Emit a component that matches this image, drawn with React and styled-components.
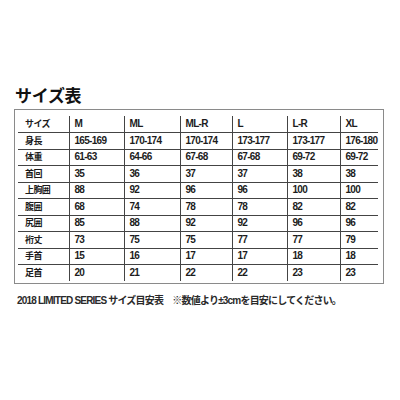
import React from "react";
import styled, { createGlobalStyle } from "styled-components";

const GlobalStyle = createGlobalStyle`
  html, body {
    margin: 0;
    padding: 0;
    background: #ffffff;
  }
  body {
    font-family: "Liberation Sans", "Noto Sans CJK JP", sans-serif;
    color: #222;
  }
`;

const columns = ["サイズ", "M", "ML", "ML-R", "L", "L-R", "XL"];
const widths = [51, 55, 56, 52, 55, 53, 38];

const rows = [
  ["身長", "165-169", "170-174", "170-174", "173-177", "173-177", "176-180"],
  ["体重", "61-63", "64-66", "67-68", "67-68", "69-72", "69-72"],
  ["首回", "35", "36", "37", "37", "38", "38"],
  ["上胸囲", "88", "92", "96", "96", "100", "100"],
  ["腹囲", "68", "74", "78", "78", "82", "82"],
  ["尻囲", "85", "88", "92", "92", "96", "96"],
  ["裄丈", "73", "75", "75", "77", "77", "79"],
  ["手首", "15", "16", "17", "17", "18", "18"],
  ["足首", "20", "21", "22", "22", "23", "23"],
];

const Page = styled.div`
  width: 400px;
  height: 400px;
  padding: 86px 0 0 15px;
  box-sizing: border-box;
`;

const Title = styled.h1`
  margin: 0 0 5px 0;
  font-family: "Noto Sans CJK JP", sans-serif;
  font-size: 17px;
  line-height: 18px;
  font-weight: 700;
  color: #111;
  letter-spacing: -0.3px;
`;

const Frame = styled.div`
  margin-left: -1px;
  width: 370px;
  height: 175px;
  box-sizing: border-box;
  border: 1px solid #8a8a8a;
  padding: 6px 0 0 3px;
`;

const Table = styled.table`
  border-collapse: collapse;
  table-layout: fixed;
  width: 360px;
`;

const Cell = styled.td`
  height: 16.5px;
  padding: 0 0 0 ${({ $first }) => ($first ? "7px" : "5px")};
  box-sizing: border-box;
  border-left: ${({ $first }) => ($first ? "none" : "1px solid #444")};
  border-bottom: ${({ $last }) => ($last ? "none" : "1px solid #444")};
  font-family: ${({ $first }) =>
    $first
      ? `"Noto Sans CJK JP", sans-serif`
      : `"Liberation Sans", "Noto Sans CJK JP", sans-serif`};
  font-size: ${({ $first }) => ($first ? "9px" : "10px")};
  font-weight: 700;
  line-height: 12px;
  letter-spacing: ${({ $first }) => ($first ? "-0.6px" : "-0.7px")};
  color: #1c1c1c;
  white-space: nowrap;
  vertical-align: middle;
  text-align: left;
`;

const Note = styled.p`
  margin: 8px 0 0 2px;
  font-family: "Liberation Sans", "Noto Sans CJK JP", sans-serif;
  font-size: 10px;
  font-weight: 700;
  letter-spacing: -0.8px;
  color: #2a2a2a;
  white-space: nowrap;
`;

export default function App() {
  return (
    <Page>
      <GlobalStyle />
      <Title>サイズ表</Title>
      <Frame>
        <Table>
          <colgroup>
            {widths.map((w, i) => (
              <col key={i} style={{ width: w }} />
            ))}
          </colgroup>
          <tbody>
            <tr>
              {columns.map((c, i) => (
                <Cell key={c} $first={i === 0}>
                  {c}
                </Cell>
              ))}
            </tr>
            {rows.map((r, ri) => (
              <tr key={r[0]}>
                {r.map((v, i) => (
                  <Cell key={i} $first={i === 0} $last={ri === rows.length - 1}>
                    {v}
                  </Cell>
                ))}
              </tr>
            ))}
          </tbody>
        </Table>
      </Frame>
      <Note>2018 LIMITED SERIES サイズ目安表　※数値より±3cmを目安にしてください。</Note>
    </Page>
  );
}
